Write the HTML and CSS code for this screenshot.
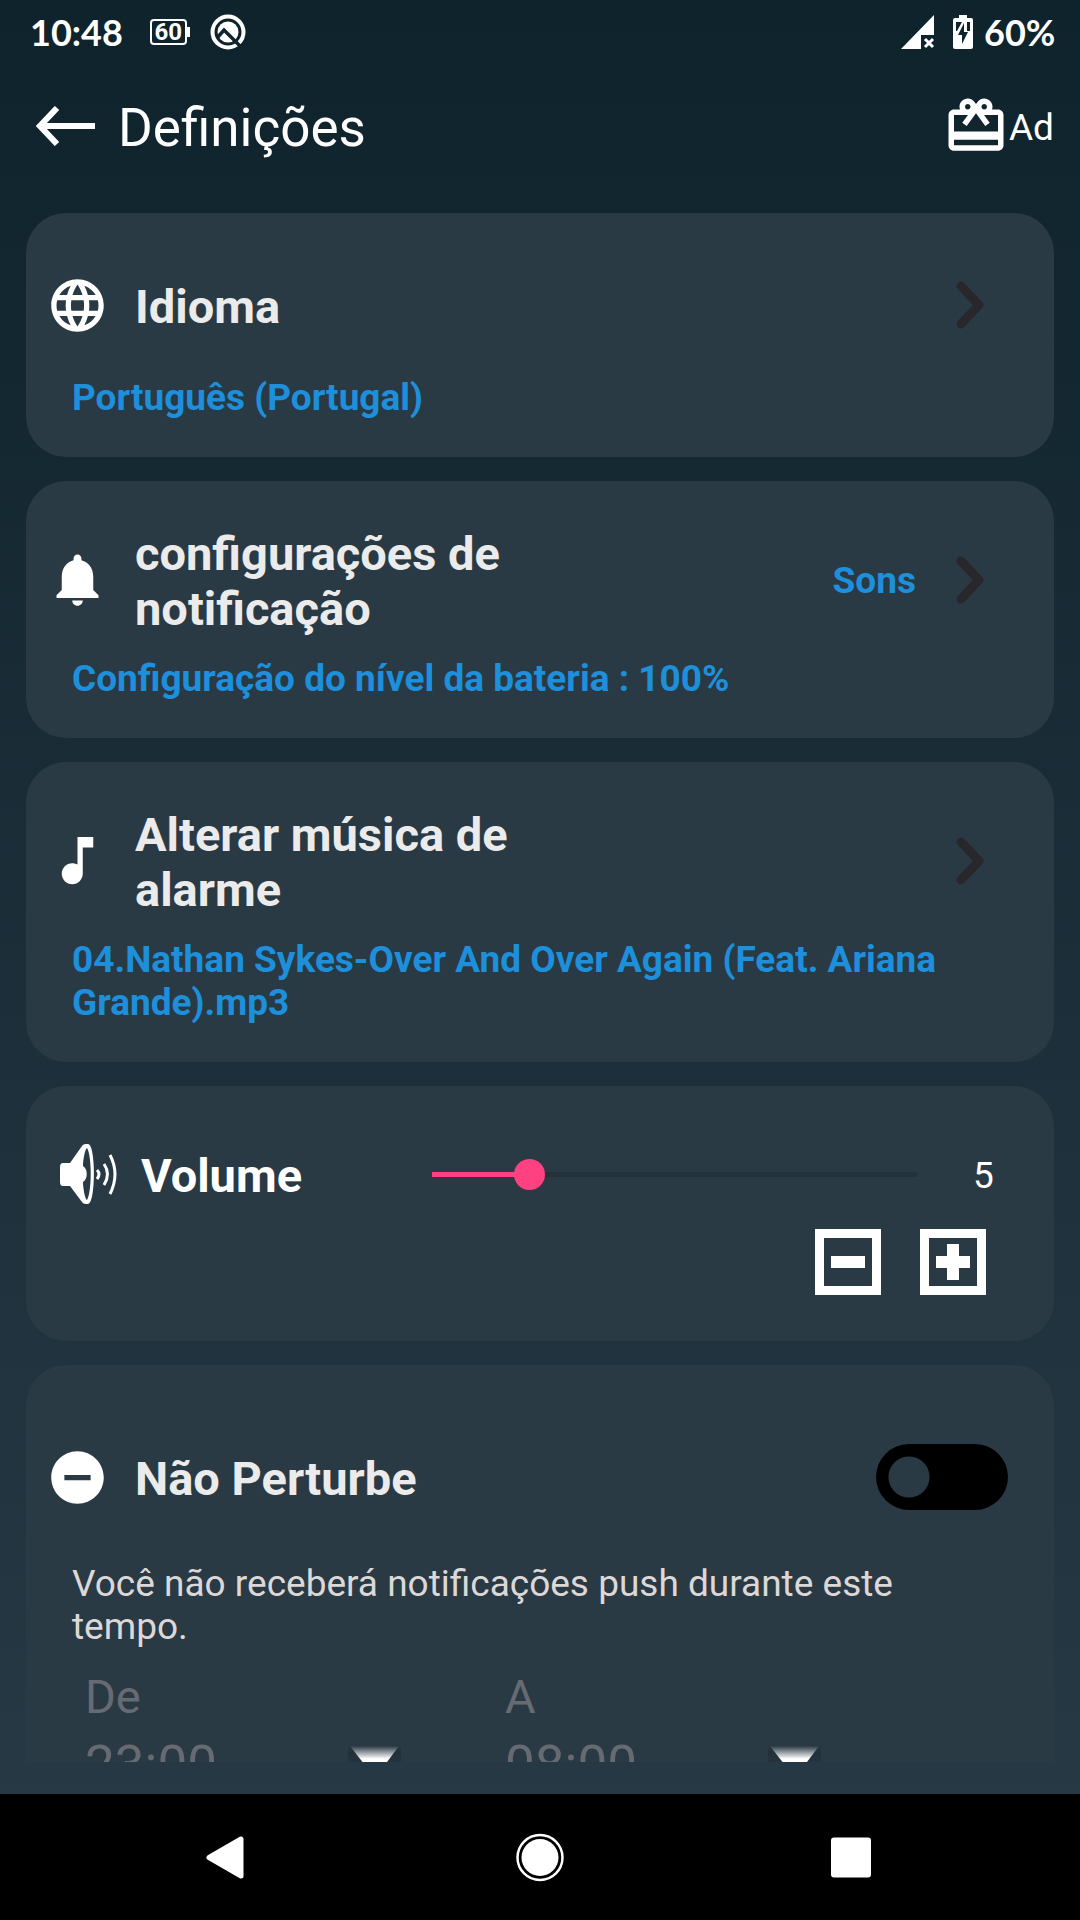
FILE: index.html
```html
<!DOCTYPE html>
<html lang="pt-PT">
<head>
<meta charset="utf-8">
<meta name="viewport" content="width=device-width, initial-scale=1">
<title>Definições</title>
<link rel="stylesheet" href="styles.css">
</head>
<body>
<div class="screen">
  <div class="status-bar">
    <span class="clock">10:48</span>
    <span class="battery-badge">60</span>
    <svg class="status-logo" width="38" height="38" viewBox="0 0 38 38" aria-hidden="true">
      <circle cx="19" cy="19" r="15.500" fill="none" stroke="#fff" stroke-width="4"/>
      <circle cx="19" cy="19" r="10.500" fill="#fff"/>
      <path d="M8 25l7-8 17 17" fill="none" stroke="#10242e" stroke-width="3.500"/>
    </svg>
    <span class="status-spacer"></span>
    <svg class="signal" width="34" height="34" viewBox="0 0 34 34" aria-hidden="true">
      <path d="M33 0v20H20v14H0z" fill="#fff"/>
      <path d="M24 24l8 8m0-8l-8 8" stroke="#fff" stroke-width="3"/>
    </svg>
    <svg class="battery" width="20" height="34" viewBox="0 0 20 34" aria-hidden="true">
      <path d="M6 0h8v3h4a2 2 0 0 1 2 2v27a2 2 0 0 1-2 2H2a2 2 0 0 1-2-2V5a2 2 0 0 1 2-2h4z" fill="#fff"/>
      <path d="M3 7h6L4 16H3zM14 7h3v9h-3zM11 8v9h4L9 29v-9H5z" fill="#10242e"/>
    </svg>
    <span class="clock">60%</span>
  </div>

  <header class="app-bar">
    <button class="icon-button" type="button" aria-label="Voltar">
      <svg width="60" height="40" viewBox="0 0 60 40"><path d="M21 2L4 20l17 18M4 20h55" fill="none" stroke="#fff" stroke-width="6"/></svg>
    </button>
    <h1 class="app-title">Definições</h1>
    <button class="ad-button" type="button">
      <svg width="66" height="66" viewBox="0 0 24 24" fill="#fff" aria-hidden="true"><path d="M20 6h-2.180c.11-.31.18-.65.18-1 0-1.660-1.340-3-3-3-1.050 0-1.960.54-2.500 1.350l-.5.67-.5-.68C10.960 2.540 10.050 2 9 2 7.340 2 6 3.340 6 5c0 .35.07.69.18 1H4c-1.110 0-1.990.89-1.990 2L2 19c0 1.110.89 2 2 2h16c1.110 0 2-.89 2-2V8c0-1.110-.89-2-2-2zm-5-2c.55 0 1 .45 1 1s-.45 1-1 1-1-.45-1-1 .45-1 1-1zM9 4c.55 0 1 .45 1 1s-.45 1-1 1-1-.45-1-1 .45-1 1-1zm11 15H4v-2h16v2zm0-5H4V8h5.080L7 10.830 8.620 12 11 8.760l1-1.360 1 1.360L15.380 12 17 10.830 14.920 8H20v6z"/></svg>
      <span class="ad-label">Ad</span>
    </button>
  </header>

  <main class="settings">
    <section class="card">
      <div class="row">
        <svg class="row-icon" viewBox="0 0 24 24" aria-hidden="true"><path d="M11.990 2C6.470 2 2 6.480 2 12s4.470 10 9.990 10C17.520 22 22 17.520 22 12S17.520 2 11.990 2zm6.930 6h-2.950c-.32-1.250-.78-2.450-1.380-3.560 1.840.63 3.370 1.910 4.330 3.560zM12 4.040c.83 1.200 1.480 2.530 1.910 3.960h-3.820c.43-1.430 1.080-2.760 1.910-3.960zM4.260 14C4.100 13.360 4 12.690 4 12s.1-1.360.26-2h3.380c-.08.66-.14 1.320-.14 2s.06 1.340.14 2H4.260zm.82 2h2.950c.32 1.250.78 2.450 1.380 3.560-1.840-.63-3.370-1.900-4.330-3.560zm2.950-8H5.080c.96-1.660 2.490-2.930 4.330-3.560C8.810 5.550 8.350 6.750 8.030 8zM12 19.960c-.83-1.200-1.480-2.530-1.910-3.960h3.820c-.43 1.430-1.080 2.760-1.910 3.960zM14.340 14H9.660c-.09-.66-.16-1.320-.16-2s.07-1.350.16-2h4.680c.09.65.16 1.320.16 2s-.07 1.340-.16 2zm.25 5.560c.6-1.110 1.060-2.310 1.380-3.560h2.950c-.96 1.650-2.490 2.930-4.330 3.560zM16.360 14c.08-.66.14-1.320.14-2s-.06-1.340-.14-2h3.380c.16.64.26 1.310.26 2s-.1 1.360-.26 2h-3.380z"/></svg>
        <h2 class="row-title">Idioma</h2>
        <button class="chevron" type="button" aria-label="Abrir idioma"><svg width="28" height="48" viewBox="0 0 28 48"><path d="M5 5l18 19L5 43"/></svg></button>
      </div>
      <p class="value">Português (Portugal)</p>
    </section>

    <section class="card">
      <div class="row">
        <svg class="row-icon" viewBox="0 0 24 24" aria-hidden="true"><path d="M12 22c1.100 0 2-.9 2-2h-4c0 1.100.89 2 2 2zm6-6v-5c0-3.070-1.640-5.640-4.500-6.320V4c0-.83-.67-1.500-1.500-1.500s-1.500.67-1.500 1.500v.68C7.630 5.360 6 7.920 6 11v5l-2 2v1h16v-1l-2-2z"/></svg>
        <h2 class="row-title">configurações de notificação</h2>
        <a class="row-link" href="#sons">Sons</a>
        <button class="chevron" type="button" aria-label="Abrir notificações"><svg width="28" height="48" viewBox="0 0 28 48"><path d="M5 5l18 19L5 43"/></svg></button>
      </div>
      <p class="value">Configuração do nível da bateria : 100%</p>
    </section>

    <section class="card">
      <div class="row">
        <svg class="row-icon" viewBox="0 0 24 24" aria-hidden="true"><path d="M12 3v10.550c-.59-.34-1.270-.55-2-.55-2.210 0-4 1.790-4 4s1.790 4 4 4 4-1.790 4-4V7h4V3h-6z"/></svg>
        <h2 class="row-title">Alterar música de alarme</h2>
        <button class="chevron" type="button" aria-label="Escolher música"><svg width="28" height="48" viewBox="0 0 28 48"><path d="M5 5l18 19L5 43"/></svg></button>
      </div>
      <p class="value">04.Nathan Sykes-Over And Over Again (Feat. Ariana Grande).mp3</p>
    </section>

    <section class="card card-volume">
      <div class="volume-row">
        <svg class="speaker" width="57" height="60" viewBox="0 0 57 60" aria-hidden="true">
          <path d="M10 19L22 2q1-2 4-2h2c8 0 8 60 0 60h-2q-3 0-4-2L10 42H3q-3 0-3-4V23q0-4 3-4z" fill="#fff"/>
          <path d="M27 4c-2 1-4 12-4 18 5 3 5 13 0 16 0 6 2 17 4 18 5-8 5-44 0-52z" fill="#2a3a44"/>
          <g fill="none" stroke="#fff" stroke-width="3"><path d="M37 26q4 4 0 9"/><path d="M44 20q7 10 0 21"/><path d="M50 11q10 19 0 39"/></g>
        </svg>
        <label class="volume-label" for="volume">Volume</label>
        <input class="slider" id="volume" type="range" min="0" max="25" value="5">
        <output class="volume-value" for="volume">5</output>
      </div>
      <div class="stepper">
        <button class="step" type="button" aria-label="Diminuir"><svg width="48" height="48" viewBox="0 0 48 48"><path d="M7 18h34v12H7z"/></svg></button>
        <button class="step" type="button" aria-label="Aumentar"><svg width="48" height="48" viewBox="0 0 48 48"><path d="M7 18h11V6h12v12h11v12H30v12H18V30H7z"/></svg></button>
      </div>
    </section>

    <section class="card card-dnd">
      <div class="row">
        <svg class="row-icon" viewBox="0 0 24 24" aria-hidden="true"><path d="M12 2C6.480 2 2 6.480 2 12s4.480 10 10 10 10-4.480 10-10S17.520 2 12 2zm5 11H7v-2h10v2z"/></svg>
        <label class="row-title" for="dnd">Não Perturbe</label>
        <input class="switch" id="dnd" type="checkbox" role="switch">
      </div>
      <p class="description">Você não receberá notificações push durante este tempo.</p>
      <div class="times">
        <div class="time-field">
          <label for="from">De</label>
          <div class="time-picker">
            <select id="from"><option>23:00</option></select>
            <svg width="53" height="53" viewBox="0 0 53 53" aria-hidden="true">
              <defs>
                <linearGradient id="arrow-fill" x1="0" y1="0" x2="0" y2="1"><stop offset="0" stop-color="#2a3a44"/><stop offset=".4" stop-color="#fff"/></linearGradient>
                <linearGradient id="arrow-shade" x1="0" y1="0" x2="0" y2="1"><stop offset="0" stop-color="#18242b" stop-opacity="0"/><stop offset=".2" stop-color="#18242b" stop-opacity=".45"/><stop offset="1" stop-color="#18242b" stop-opacity="0"/></linearGradient>
              </defs>
              <path d="M0 0h53v40H0z" fill="url(#arrow-shade)"/>
              <path d="M2 2h49L27 34z" fill="url(#arrow-fill)"/>
            </svg>
          </div>
        </div>
        <div class="time-field">
          <label for="to">A</label>
          <div class="time-picker">
            <select id="to"><option>08:00</option></select>
            <svg width="53" height="53" viewBox="0 0 53 53" aria-hidden="true">
              <path d="M0 0h53v40H0z" fill="url(#arrow-shade)"/>
              <path d="M2 2h49L27 34z" fill="url(#arrow-fill)"/>
            </svg>
          </div>
        </div>
      </div>
    </section>
  </main>

  <nav class="nav-bar" aria-label="Sistema">
    <button class="nav-button" type="button" aria-label="Retroceder"><svg width="63" height="63" viewBox="0 0 63 63"><path d="M43 13v37L11 31.500z" fill="#fff" stroke="#fff" stroke-width="5" stroke-linejoin="round"/></svg></button>
    <button class="nav-button" type="button" aria-label="Início"><svg width="63" height="63" viewBox="0 0 63 63"><circle cx="31" cy="31.500" r="22.500" fill="none" stroke="#fff" stroke-width="2.500"/><circle cx="31" cy="31.500" r="18.500" fill="#fff"/></svg></button>
    <button class="nav-button" type="button" aria-label="Recentes"><svg width="63" height="63" viewBox="0 0 63 63"><rect x="11" y="11.500" width="40" height="40" rx="3" fill="#fff"/></svg></button>
  </nav>
</div>
</body>
</html>
```
FILE: styles.css
```css
* {
  box-sizing: border-box;
}

body {
  margin: 0;
  font-family: Roboto, sans-serif;
  color: #fff;
  background: #000;
}

h1, h2, p {
  margin: 0;
}

button {
  padding: 0;
  border: 0;
  background: none;
  color: inherit;
  font: inherit;
}

svg {
  display: block;
  flex: none;
}

.screen {
  display: flex;
  flex-direction: column;
  height: 100vh;
  background: linear-gradient(#0f232d, #283a45);
}

/* System status bar */
.status-bar {
  display: flex;
  align-items: center;
  height: 63px;
  padding: 0 22px 0 30px;
}

.clock {
  min-width: 74px;
  font: 700 36px/44px Lato, sans-serif;
}

.battery-badge {
  position: relative;
  width: 37px;
  height: 26px;
  margin: 0 22px 0 27px;
  border: 2px solid #fff;
  border-radius: 4px;
  font: 700 24px/22px Roboto, sans-serif;
  text-align: center;
}

.battery-badge::after {
  content: "";
  position: absolute;
  top: 6px;
  right: -5px;
  width: 3px;
  height: 10px;
  background: #fff;
}

.status-spacer {
  flex: 1;
}

.signal {
  margin-right: 18px;
}

.battery {
  margin-right: 11px;
}

/* App bar */
.app-bar {
  display: flex;
  align-items: center;
  height: 126px;
  padding: 0 26px 0 36px;
}

.icon-button {
  margin-right: 22px;
}

.app-title {
  flex: 1;
  padding-top: 3px;
  font-size: 53px;
  line-height: 64px;
  font-weight: 400;
}

.ad-button {
  display: flex;
  align-items: center;
  font-size: 37px;
  line-height: 43px;
}

.ad-label {
  padding-top: 3px;
}

/* Scrolling list of settings */
.settings {
  flex: 1;
  min-height: 0;
  display: flex;
  flex-direction: column;
  gap: 24px;
  margin-bottom: 32px;
  padding: 24px 26px 0;
  overflow: hidden;
}

.card {
  flex: none;
  padding: 42px 46px 38px;
  border-radius: 40px;
  background: #2a3a44;
}

.row {
  display: flex;
  align-items: center;
  min-height: 100px;
  margin: 0 24px 21px -26px;
}

.row-icon {
  width: 63px;
  height: 63px;
  margin-right: 26px;
  fill: #fff;
}

.row-title {
  flex: 0 1 400px;
  padding-top: 3px;
  font-size: 47px;
  line-height: 55px;
  font-weight: 700;
  color: #ebebeb;
}

.row-link {
  margin-left: auto;
  padding-top: 2px;
  font-size: 37px;
  line-height: 43px;
  font-weight: 700;
  color: #1e8fdb;
  text-decoration: none;
}

.chevron {
  margin-left: auto;
}

.row-link + .chevron {
  margin-left: 40px;
}

.chevron path {
  fill: none;
  stroke: #28272b;
  stroke-width: 9;
  stroke-linecap: round;
  stroke-linejoin: round;
}

.value {
  font-size: 37px;
  line-height: 43px;
  font-weight: 700;
  color: #1e8fdb;
}

/* Volume */
.card-volume {
  padding: 58px 68px 46px 34px;
}

.volume-row {
  display: flex;
  align-items: center;
  height: 60px;
}

.volume-label {
  width: 276px;
  margin-left: 24px;
  padding-top: 3px;
  font-size: 47px;
  line-height: 55px;
  font-weight: 700;
}

.slider {
  flex: 1;
  min-width: 0;
  height: 31px;
  margin: 0;
  appearance: none;
  background: linear-gradient(to right, #ff4081 20%, #26323a 20%) center / calc(100% - 30px) 5px no-repeat;
}

.slider::-webkit-slider-thumb {
  appearance: none;
  width: 31px;
  height: 31px;
  border-radius: 50%;
  background: #ff4081;
}

.volume-value {
  width: 54px;
  padding: 3px 0 0 41px;
  font-size: 37px;
  line-height: 43px;
}

.stepper {
  display: flex;
  justify-content: flex-end;
  gap: 39px;
  margin-top: 25px;
}

.step {
  width: 66px;
  height: 66px;
  border: 9px solid #fff;
}

.step path {
  fill: #fff;
}

/* Do not disturb */
.card-dnd {
  padding-top: 62px;
}

.card-dnd .row {
  margin-right: 0;
  margin-bottom: 35px;
}

.switch {
  width: 132px;
  height: 66px;
  margin: 0 0 0 auto;
  appearance: none;
  border-radius: 33px;
  background: radial-gradient(circle at 33px 33px, #2a3a44 20px, #000 21px);
}

.description {
  font-size: 37px;
  line-height: 43px;
  color: #dcd8d8;
}

.times {
  display: flex;
  margin: 21px 0 0 13px;
}

.time-field {
  flex: 0 1 420px;
  font-size: 47px;
  line-height: 55px;
  color: #666b72;
}

.time-field label {
  display: block;
}

.time-picker {
  display: flex;
  align-items: flex-start;
  padding-top: 10px;
}

.time-picker select {
  width: 263px;
  padding: 0;
  border: 0;
  appearance: none;
  background: none;
  color: #666b72;
  font: 400 53px/62px Roboto, sans-serif;
}

.time-picker svg {
  margin-top: 10px;
}

/* System navigation */
.nav-bar {
  display: flex;
  align-items: center;
  justify-content: center;
  gap: 248px;
  height: 126px;
  background: #000;
}
```
